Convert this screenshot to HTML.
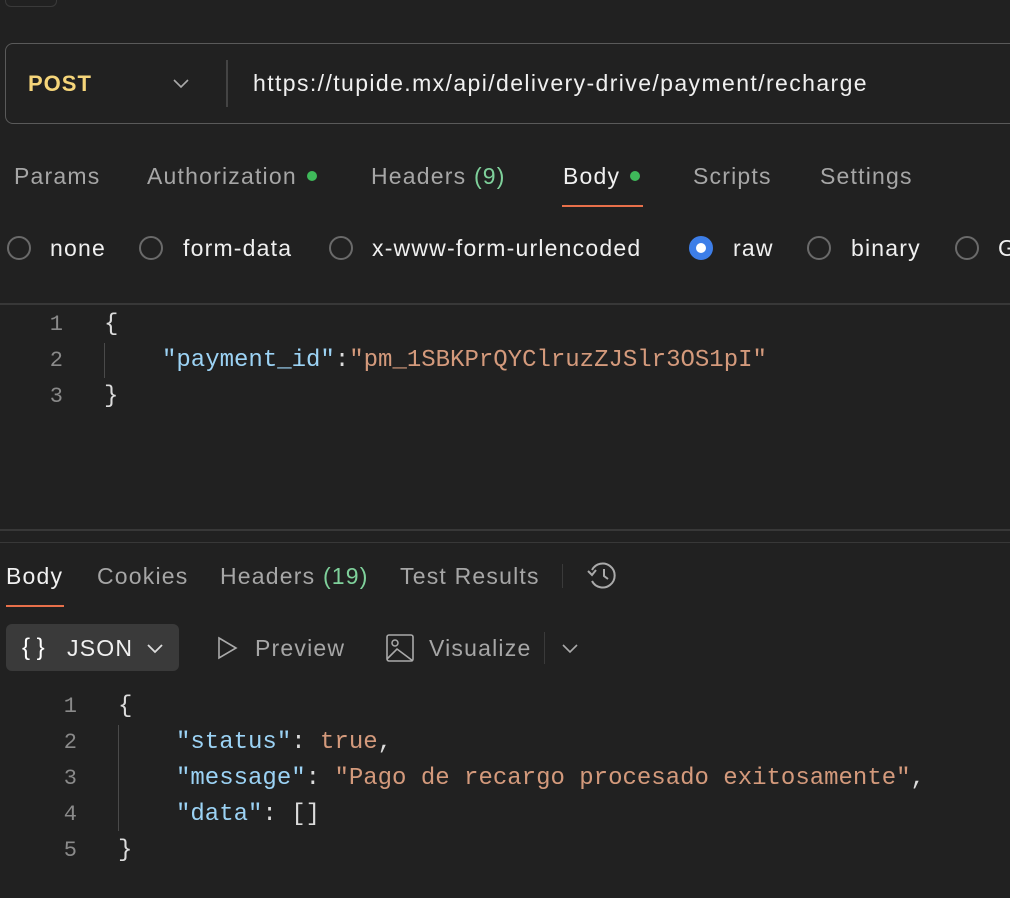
<!DOCTYPE html>
<html><head><style>
body{margin:0;width:1010px;height:898px;background:#212121;overflow:hidden;position:relative;font-family:"Liberation Sans",sans-serif;color:#e6e6e6}
.a{position:absolute;white-space:nowrap}
.t{font-size:23px;letter-spacing:1.2px;color:#a6a6a6;line-height:26px}
.w{color:#f0f0f0}
.g{color:#7fd19b}
.dot{display:inline-block;width:10px;height:10px;border-radius:50%;background:#3fb95a;margin-left:10px;vertical-align:middle;position:relative;top:-2px}
.r{position:absolute;width:24px;height:24px;border:2px solid #6a6a6a;border-radius:50%;box-sizing:border-box}
.m{font-family:"Liberation Mono",monospace;font-size:24px;line-height:36px}
.n{color:#8a8a8a;text-align:right;width:30px;font-size:22px}
.k{color:#9cd3f5}.s{color:#d49a7c}.p{color:#dcdcdc}
</style></head><body>
<div class="a" style="left:5px;top:-20px;width:50px;height:25px;border:1px solid #3a3a3a;border-radius:6px"></div>
<div class="a" style="left:5px;top:43px;width:1020px;height:81px;border:1.5px solid #5a5a5a;border-radius:8px;box-sizing:border-box"></div>
<div class="a" style="left:28px;top:71px;font-size:22px;letter-spacing:1px;font-weight:bold;color:#f5d57a">POST</div>
<svg class="a" style="left:172px;top:77px" width="18" height="12"><path d="M2 3l7 7 7-7" fill="none" stroke="#aaa" stroke-width="1.6"/></svg>
<div class="a" style="left:226px;top:60px;width:2px;height:47px;background:#444"></div>
<div class="a" style="left:253px;top:70px;font-size:23px;letter-spacing:1.4px;color:#f0f0f0">https://tupide.mx/api/delivery-drive/payment/recharge</div>

<div class="a t" style="left:14px;top:163px">Params</div>
<div class="a t" style="left:147px;top:163px">Authorization<span class="dot"></span></div>
<div class="a t" style="left:371px;top:163px">Headers <span class="g">(9)</span></div>
<div class="a t w" style="left:563px;top:163px">Body<span class="dot"></span></div>
<div class="a" style="left:562px;top:205px;width:81px;height:2px;background:#e8704a"></div>
<div class="a t" style="left:693px;top:163px">Scripts</div>
<div class="a t" style="left:820px;top:163px">Settings</div>

<div class="r" style="left:7px;top:236px"></div><div class="a t w" style="left:50px;top:235px">none</div>
<div class="r" style="left:139px;top:236px"></div><div class="a t w" style="left:183px;top:235px">form-data</div>
<div class="r" style="left:329px;top:236px"></div><div class="a t w" style="left:372px;top:235px">x-www-form-urlencoded</div>
<div class="r" style="left:689px;top:236px;border:7px solid #3d7ee8;background:#fff"></div><div class="a t w" style="left:733px;top:235px">raw</div>
<div class="r" style="left:807px;top:236px"></div><div class="a t w" style="left:851px;top:235px">binary</div>
<div class="r" style="left:955px;top:236px"></div><div class="a t w" style="left:998px;top:235px">G</div>

<div class="a" style="left:0;top:303px;width:1010px;height:2px;background:#383838"></div>
<div class="a m n" style="left:33px;top:307px">1<br>2<br>3</div>
<div class="a" style="left:104px;top:343px;width:1px;height:35px;background:#4a4a4a"></div>
<div class="a m p" style="left:104px;top:307px">{<br><span style="padding-left:58px"></span><span class="k">"payment_id"</span>:<span class="s">"pm_1SBKPrQYClruzZJSlr3OS1pI"</span><br>}</div>

<div class="a" style="left:0;top:529px;width:1010px;height:2px;background:#383838"></div>
<div class="a" style="left:0;top:542px;width:1010px;height:1px;background:#383838"></div>

<div class="a t w" style="left:6px;top:563px">Body</div>
<div class="a" style="left:6px;top:605px;width:58px;height:2px;background:#e8704a"></div>
<div class="a t" style="left:97px;top:563px">Cookies</div>
<div class="a t" style="left:220px;top:563px">Headers <span class="g">(19)</span></div>
<div class="a t" style="left:400px;top:563px">Test Results</div>
<div class="a" style="left:562px;top:564px;width:1px;height:24px;background:#3a3a3a"></div>
<svg class="a" style="left:587px;top:561px" width="34" height="30"><path d="M5 9A12 12 0 1 1 5 20" fill="none" stroke="#aaa" stroke-width="2"/><path d="M1 10l4 4 4-5" fill="none" stroke="#aaa" stroke-width="2"/><path d="M17 8v7l4 3" fill="none" stroke="#aaa" stroke-width="2"/></svg>

<div class="a" style="left:6px;top:624px;width:173px;height:47px;background:#3a3a3a;border-radius:6px"></div>
<div class="a" style="left:22px;top:634px;font-size:24px;color:#fff">{ }</div>
<div class="a t w" style="left:67px;top:635px">JSON</div>
<svg class="a" style="left:146px;top:642px" width="18" height="12"><path d="M2 3l7 7 7-7" fill="none" stroke="#ddd" stroke-width="1.8"/></svg>
<svg class="a" style="left:216px;top:636px" width="24" height="24"><path d="M3 2l17 10-17 10z" fill="none" stroke="#aaa" stroke-width="1.6"/></svg>
<div class="a t" style="left:255px;top:635px">Preview</div>
<svg class="a" style="left:386px;top:634px" width="30" height="30"><rect x="1" y="1" width="26" height="26" rx="2" fill="none" stroke="#aaa" stroke-width="1.6"/><circle cx="9" cy="9" r="3" fill="none" stroke="#aaa" stroke-width="1.5"/><path d="M1 25l10-10 16 12" fill="none" stroke="#aaa" stroke-width="1.6"/></svg>
<div class="a t" style="left:429px;top:635px">Visualize</div>
<div class="a" style="left:544px;top:632px;width:1px;height:32px;background:#3a3a3a"></div>
<svg class="a" style="left:561px;top:642px" width="18" height="12"><path d="M2 3l7 7 7-7" fill="none" stroke="#aaa" stroke-width="1.6"/></svg>

<div class="a m n" style="left:47px;top:689px">1<br>2<br>3<br>4<br>5</div>
<div class="a" style="left:118px;top:725px;width:1px;height:106px;background:#4a4a4a"></div>
<div class="a m p" style="left:118px;top:689px">{<br><span style="padding-left:58px"></span><span class="k">"status"</span>: <span class="s">true</span>,<br><span style="padding-left:58px"></span><span class="k">"message"</span>: <span class="s">"Pago de recargo procesado exitosamente"</span>,<br><span style="padding-left:58px"></span><span class="k">"data"</span>: []<br>}</div>
</body></html>
